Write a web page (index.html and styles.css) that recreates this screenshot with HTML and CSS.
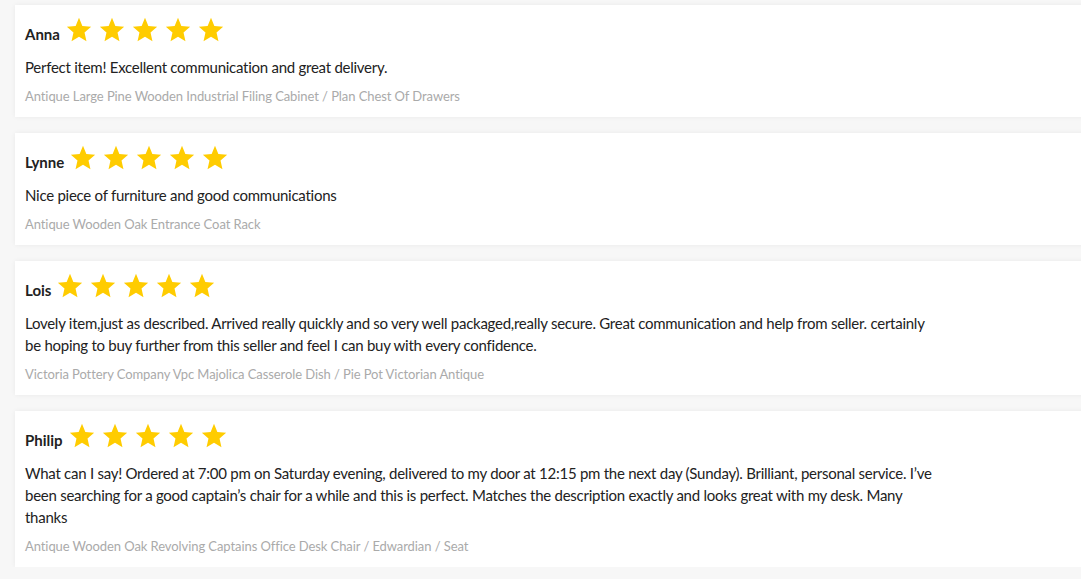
FILE: index.html
```html
<!DOCTYPE html>
<html lang="en">
<head>
  <meta charset="UTF-8" />
  <meta name="viewport" content="width=device-width, initial-scale=1" />
  <title>Reviews</title>
  <link rel="stylesheet" href="styles.css">
</head>
<body>
  <svg width="0" height="0" class="defs">
    <defs>
      <polygon id="star" points="12,0.8 15.1,8.3 23.2,9 17.1,14.4 18.9,22.4 12,18.2 5.1,22.4 6.9,14.4 0.8,9 8.9,8.3" />
    </defs>
  </svg>

  <div class="reviews">
    <!-- Anna -->
    <div class="review">
      <div class="review-head">
        <span class="name">Anna</span>
        <span class="stars">
          <svg viewBox="0 0 24 24"><use href="#star"/></svg>
          <svg viewBox="0 0 24 24"><use href="#star"/></svg>
          <svg viewBox="0 0 24 24"><use href="#star"/></svg>
          <svg viewBox="0 0 24 24"><use href="#star"/></svg>
          <svg viewBox="0 0 24 24"><use href="#star"/></svg>
        </span>
      </div>
      <p class="text">Perfect item! Excellent communication and great delivery.</p>
      <div class="product">Antique Large Pine Wooden Industrial Filing Cabinet / Plan Chest Of Drawers</div>
    </div>

    <!-- Lynne -->
    <div class="review">
      <div class="review-head">
        <span class="name">Lynne</span>
        <span class="stars">
          <svg viewBox="0 0 24 24"><use href="#star"/></svg>
          <svg viewBox="0 0 24 24"><use href="#star"/></svg>
          <svg viewBox="0 0 24 24"><use href="#star"/></svg>
          <svg viewBox="0 0 24 24"><use href="#star"/></svg>
          <svg viewBox="0 0 24 24"><use href="#star"/></svg>
        </span>
      </div>
      <p class="text">Nice piece of furniture and good communications</p>
      <div class="product">Antique Wooden Oak Entrance Coat Rack</div>
    </div>

    <!-- Lois -->
    <div class="review">
      <div class="review-head">
        <span class="name">Lois</span>
        <span class="stars">
          <svg viewBox="0 0 24 24"><use href="#star"/></svg>
          <svg viewBox="0 0 24 24"><use href="#star"/></svg>
          <svg viewBox="0 0 24 24"><use href="#star"/></svg>
          <svg viewBox="0 0 24 24"><use href="#star"/></svg>
          <svg viewBox="0 0 24 24"><use href="#star"/></svg>
        </span>
      </div>
      <p class="text">Lovely item,just as described. Arrived really quickly and so very well packaged,really secure. Great communication and help from seller. certainly be hoping to buy further from this seller and feel I can buy with every confidence.</p>
      <div class="product">Victoria Pottery Company Vpc Majolica Casserole Dish / Pie Pot Victorian Antique</div>
    </div>

    <!-- Philip -->
    <div class="review">
      <div class="review-head">
        <span class="name">Philip</span>
        <span class="stars">
          <svg viewBox="0 0 24 24"><use href="#star"/></svg>
          <svg viewBox="0 0 24 24"><use href="#star"/></svg>
          <svg viewBox="0 0 24 24"><use href="#star"/></svg>
          <svg viewBox="0 0 24 24"><use href="#star"/></svg>
          <svg viewBox="0 0 24 24"><use href="#star"/></svg>
        </span>
      </div>
      <p class="text">What can I say! Ordered at 7:00 pm on Saturday evening, delivered to my door at 12:15 pm the next day (Sunday). Brilliant, personal service. I’ve been searching for a good captain’s chair for a while and this is perfect. Matches the description exactly and looks great with my desk. Many thanks</p>
      <div class="product">Antique Wooden Oak Revolving Captains Office Desk Chair / Edwardian / Seat</div>
    </div>
  </div>
</body>
</html>
```

FILE: styles.css
```css
body {
  margin: 0;
  padding: 5px 0 0 15px;
  background: #f7f7f7;
  color: #222;
  font-family: Lato, "Open Sans", sans-serif;
  overflow: hidden;
}
.defs {
  position: absolute;
}
.reviews {
  width: 1100px;
  display: flex;
  flex-direction: column;
  gap: 16px;
}
.review {
  background: #fff;
  padding: 12px 10px 12px 10px;
  box-shadow: 0 0 5px rgba(0,0,0,0.06);
}
.review-head {
  display: flex;
  align-items: flex-end;
  gap: 6px;
  height: 26px;
}
.name {
  font-weight: bold;
  font-size: 15px;
  line-height: 18px;
  color: #222;
}
.stars {
  display: flex;
  gap: 7px;
}
.stars svg {
  width: 26px;
  height: 26px;
  fill: #ffcc00;
  display: block;
}
.text {
  margin: 13px 0 0;
  max-width: 912px;
  font-size: 15px;
  line-height: 22px;
  letter-spacing: -0.26px;
}
.product {
  margin-top: 9px;
  font-size: 13px;
  line-height: 18px;
  letter-spacing: -0.08px;
  color: #aaa;
}
```
